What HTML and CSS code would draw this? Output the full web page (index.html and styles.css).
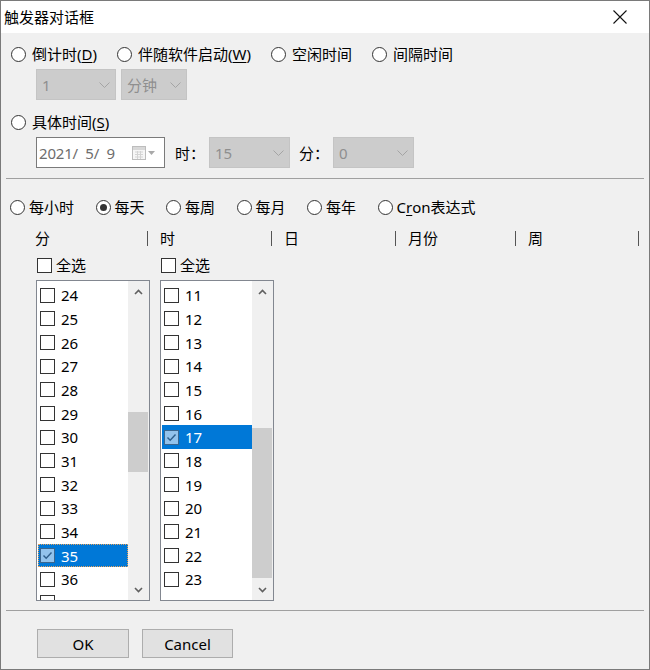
FILE: index.html
```html
<!DOCTYPE html>
<html lang="zh-CN">
<head>
  <meta charset="UTF-8" />
  <title>触发器对话框</title>
  <link rel="stylesheet" href="styles.css">
</head>
<body>
<div class="window">

  <!-- Pasek tytułu -->
  <div class="titlebar">
    <span class="title">触发器对话框</span>
    <span class="close">
      <svg width="16" height="16" viewBox="0 0 16 16"><path d="M1.5 1.5L14.5 14.5M14.5 1.5L1.5 14.5" stroke="#111" stroke-width="1.1" fill="none"/></svg>
    </span>
  </div>

  <div class="content">

    <div class="radio-row first">
      <label class="radio"><span class="circle"></span>倒计时(<u>D</u>)</label>
      <label class="radio"><span class="circle"></span>伴随软件启动(<u>W</u>)</label>
      <label class="radio"><span class="circle"></span>空闲时间</label>
      <label class="radio"><span class="circle"></span>间隔时间</label>
    </div>

    <div class="field-row">
      <div class="combo disabled c-num">
        <span>1</span>
        <svg width="11" height="6" viewBox="0 0 11 6"><polyline points="0.5,0.5 5.5,5.5 10.5,0.5" fill="none" stroke="#a4a4a4"/></svg>
      </div>
      <div class="combo disabled c-unit">
        <span>分钟</span>
        <svg width="11" height="6" viewBox="0 0 11 6"><polyline points="0.5,0.5 5.5,5.5 10.5,0.5" fill="none" stroke="#a4a4a4"/></svg>
      </div>
    </div>

    <div class="radio-row second">
      <label class="radio"><span class="circle"></span>具体时间(<u>S</u>)</label>
    </div>

    <div class="field-row">
      <div class="datepicker">
        <span class="date-text">2021/  5/  9</span>
        <svg width="25" height="16" viewBox="0 0 25 16">
          <rect x="0.5" y="1.5" width="13" height="13" fill="#f6f6f6" stroke="#bdbdbd"/>
          <rect x="1" y="2" width="12" height="3" fill="#d8d8d8"/>
          <path d="M3 7h8M3 9.5h8M3 12h8M5.5 6v8M8.5 6v8" stroke="#d4d4d4" stroke-width="1"/>
          <polygon points="16,6 23,6 19.5,10" fill="#a9a9a9"/>
        </svg>
      </div>
      <span class="field-label">时：</span>
      <div class="combo disabled c-hour">
        <span>15</span>
        <svg width="11" height="6" viewBox="0 0 11 6"><polyline points="0.5,0.5 5.5,5.5 10.5,0.5" fill="none" stroke="#a4a4a4"/></svg>
      </div>
      <span class="field-label">分：</span>
      <div class="combo disabled c-min">
        <span>0</span>
        <svg width="11" height="6" viewBox="0 0 11 6"><polyline points="0.5,0.5 5.5,5.5 10.5,0.5" fill="none" stroke="#a4a4a4"/></svg>
      </div>
    </div>

    <div class="separator top-sep"></div>

    <div class="radio-row freq">
      <label class="radio"><span class="circle"></span>每小时</label>
      <label class="radio"><span class="circle checked"></span>每天</label>
      <label class="radio"><span class="circle"></span>每周</label>
      <label class="radio"><span class="circle"></span>每月</label>
      <label class="radio"><span class="circle"></span>每年</label>
      <label class="radio"><span class="circle"></span>C<u>r</u>on表达式</label>
    </div>

    <!-- Nagłówek kolumn -->
    <div class="columns-header">
      <div class="col w1"><span>分</span><span class="sep"></span></div>
      <div class="col w2"><span>时</span><span class="sep"></span></div>
      <div class="col w3"><span>日</span><span class="sep"></span></div>
      <div class="col w4"><span>月份</span><span class="sep"></span></div>
      <div class="col w5"><span>周</span><span class="sep"></span></div>
    </div>

    <div class="lists">

      <div class="list-col">
        <label class="check"><span class="box"></span>全选</label>
        <div class="listbox">
          <div class="items">
            <div class="item"><span class="box"></span>24</div>
            <div class="item"><span class="box"></span>25</div>
            <div class="item"><span class="box"></span>26</div>
            <div class="item"><span class="box"></span>27</div>
            <div class="item"><span class="box"></span>28</div>
            <div class="item"><span class="box"></span>29</div>
            <div class="item"><span class="box"></span>30</div>
            <div class="item"><span class="box"></span>31</div>
            <div class="item"><span class="box"></span>32</div>
            <div class="item"><span class="box"></span>33</div>
            <div class="item"><span class="box"></span>34</div>
            <div class="item selected focused"><span class="box checked"><svg width="13" height="13" viewBox="0 0 13 13"><polyline points="2.5,6.5 5.2,9.3 10.5,3.5" fill="none" stroke="#2f5f8c" stroke-width="1.4"/></svg></span>35</div>
            <div class="item"><span class="box"></span>36</div>
            <div class="item"><span class="box"></span></div>
          </div>
          <div class="scrollbar">
            <div class="arrow"><svg width="9" height="6" viewBox="0 0 9 6"><polyline points="1,5 4.5,1.5 8,5" fill="none" stroke="#606060" stroke-width="1.6"/></svg></div>
            <div class="track"><div class="thumb thumb-min"></div></div>
            <div class="arrow"><svg width="9" height="6" viewBox="0 0 9 6"><polyline points="1,1 4.5,4.5 8,1" fill="none" stroke="#606060" stroke-width="1.6"/></svg></div>
          </div>
        </div>
      </div>

      <div class="list-col">
        <label class="check"><span class="box"></span>全选</label>
        <div class="listbox">
          <div class="items">
            <div class="item"><span class="box"></span>11</div>
            <div class="item"><span class="box"></span>12</div>
            <div class="item"><span class="box"></span>13</div>
            <div class="item"><span class="box"></span>14</div>
            <div class="item"><span class="box"></span>15</div>
            <div class="item"><span class="box"></span>16</div>
            <div class="item selected"><span class="box checked"><svg width="13" height="13" viewBox="0 0 13 13"><polyline points="2.5,6.5 5.2,9.3 10.5,3.5" fill="none" stroke="#2f5f8c" stroke-width="1.4"/></svg></span>17</div>
            <div class="item"><span class="box"></span>18</div>
            <div class="item"><span class="box"></span>19</div>
            <div class="item"><span class="box"></span>20</div>
            <div class="item"><span class="box"></span>21</div>
            <div class="item"><span class="box"></span>22</div>
            <div class="item"><span class="box"></span>23</div>
          </div>
          <div class="scrollbar">
            <div class="arrow"><svg width="9" height="6" viewBox="0 0 9 6"><polyline points="1,5 4.5,1.5 8,5" fill="none" stroke="#606060" stroke-width="1.6"/></svg></div>
            <div class="track"><div class="thumb thumb-hour"></div></div>
            <div class="arrow"><svg width="9" height="6" viewBox="0 0 9 6"><polyline points="1,1 4.5,4.5 8,1" fill="none" stroke="#606060" stroke-width="1.6"/></svg></div>
          </div>
        </div>
      </div>

    </div>

    <div class="separator bottom-sep"></div>

    <div class="buttons">
      <button class="btn ok">OK</button>
      <button class="btn cancel">Cancel</button>
    </div>

  </div>
</div>
</body>
</html>
```

FILE: styles.css
```css
body {
  margin: 0;
  background-color: #f0f0f0;
  font-family: "Noto Sans", "Noto Sans CJK SC", sans-serif;
  font-size: 15px;
  line-height: 20px;
  color: #000;
}

.window {
  width: 650px;
  height: 670px;
  box-sizing: border-box;
  border: 1px solid #7a7a7a;
  background-color: #f0f0f0;
  overflow: hidden;
}

.titlebar {
  height: 32px;
  background-color: #fff;
  display: flex;
  align-items: center;
  justify-content: space-between;
  padding-left: 3px;
}

.title {
  font-size: 15px;
}

.close {
  width: 46px;
  display: flex;
  justify-content: center;
  margin-right: 6px;
}

.close svg {
  display: block;
}

.content {
  padding-top: 11px;
}

/* radio */
.radio-row {
  display: flex;
  align-items: center;
  height: 20px;
  padding-left: 10px;
}

.radio-row.first {
  gap: 20px;
}

.radio-row.second {
  margin-top: 12px;
}

.radio-row.freq {
  margin-top: 18px;
  padding-left: 9px;
  gap: 21.5px;
}

.radio {
  display: flex;
  align-items: center;
  white-space: nowrap;
}

.circle {
  width: 15px;
  height: 15px;
  box-sizing: border-box;
  border: 1px solid #333;
  border-radius: 50%;
  background-color: #fff;
  margin-right: 6px;
  display: flex;
  align-items: center;
  justify-content: center;
}

.freq .circle {
  margin-right: 4px;
}

.circle.checked::after {
  content: "";
  width: 7px;
  height: 7px;
  border-radius: 50%;
  background-color: #333;
}

u {
  text-decoration: underline;
  text-underline-offset: 2px;
}

/* pola */
.field-row {
  display: flex;
  align-items: center;
  margin-top: 5px;
  padding-left: 35px;
}

.combo {
  height: 31px;
  box-sizing: border-box;
  display: flex;
  align-items: center;
  justify-content: space-between;
  padding: 0 5px 0 5px;
}

.combo.disabled {
  background-color: #cccccc;
  border: 1px solid #c4c4c4;
  color: #8f8f8f;
}

.combo svg {
  display: block;
}

.c-num {
  width: 80px;
}

.c-unit {
  width: 66px;
  margin-left: 5px;
}

.c-hour,
.c-min {
  width: 81px;
}

.c-hour {
  margin-right: 9px;
}

.datepicker {
  width: 129px;
  height: 31px;
  box-sizing: border-box;
  border: 1px solid #7a7a7a;
  background-color: #fff;
  display: flex;
  align-items: center;
  justify-content: space-between;
  padding: 0 7px 0 2px;
  margin-right: 10px;
  color: #6d6d6d;
}

.date-text {
  white-space: pre;
  letter-spacing: -0.2px;
}

.datepicker svg {
  display: block;
}

.field-label {
  width: 30px;
  margin-right: 4px;
  white-space: nowrap;
}

.separator {
  height: 1px;
  background-color: #a0a0a0;
  margin: 0 5px;
}

.top-sep {
  margin-top: 10px;
}

.bottom-sep {
  margin-top: 9px;
}

/* nagłówek kolumn */
.columns-header {
  display: flex;
  margin-top: 11px;
  padding-left: 23px;
  height: 20px;
}

.col {
  display: flex;
  align-items: center;
  justify-content: space-between;
  padding-left: 11px;
  box-sizing: border-box;
}

.col .sep {
  width: 1px;
  height: 15px;
  background-color: #555;
  margin-right: 1px;
}

.w1 { width: 125px; }
.w2 { width: 124px; }
.w3 { width: 124px; }
.w4 { width: 120px; }
.w5 { width: 123px; }

/* listy */
.lists {
  display: flex;
  gap: 10px;
  padding-left: 35px;
  margin-top: 7px;
}

.list-col {
  width: 114px;
}

.check {
  display: flex;
  align-items: center;
  height: 20px;
  padding-left: 1px;
}

.box {
  width: 15px;
  height: 15px;
  box-sizing: border-box;
  border: 1px solid #333;
  background-color: #fff;
  flex-shrink: 0;
}

.check .box {
  margin-right: 4px;
}

.box.checked {
  background-color: #93c3ec;
  border-color: #3a668f;
  display: flex;
  align-items: center;
  justify-content: center;
}

.box svg {
  display: block;
}

.listbox {
  margin-top: 5px;
  height: 321px;
  box-sizing: border-box;
  border: 1px solid #828790;
  background-color: #fff;
  display: flex;
  padding-left: 1px;
  overflow: hidden;
}

.items {
  width: 90px;
  padding-top: 2.5px;
  overflow: hidden;
}

.item {
  height: 23.67px;
  display: flex;
  align-items: center;
  gap: 6px;
  padding-left: 2px;
  box-sizing: border-box;
}

.item.selected {
  background-color: #0078d7;
  color: #fff;
}

.item.focused {
  outline: 1px dotted #e8a25a;
  outline-offset: -1px;
}

.scrollbar {
  width: 21px;
  background-color: #f0f0f0;
  display: flex;
  flex-direction: column;
}

.arrow {
  height: 21px;
  display: flex;
  align-items: center;
  justify-content: center;
}

.arrow svg {
  display: block;
}

.track {
  flex: 1;
}

.thumb {
  background-color: #cdcdcd;
  margin-right: 1px;
}

.thumb-min {
  margin-top: 110px;
  height: 60px;
}

.thumb-hour {
  margin-top: 126px;
  height: 150px;
}

/* przyciski */
.buttons {
  display: flex;
  gap: 13px;
  padding-left: 36px;
  margin-top: 18px;
}

.btn {
  height: 29px;
  box-sizing: border-box;
  background-color: #e1e1e1;
  border: 1px solid #adadad;
  font-family: "Noto Sans", "Noto Sans CJK SC", sans-serif;
  font-size: 15px;
  color: #000;
  padding: 0;
}

.btn.ok {
  width: 92px;
}

.btn.cancel {
  width: 91px;
}
```
